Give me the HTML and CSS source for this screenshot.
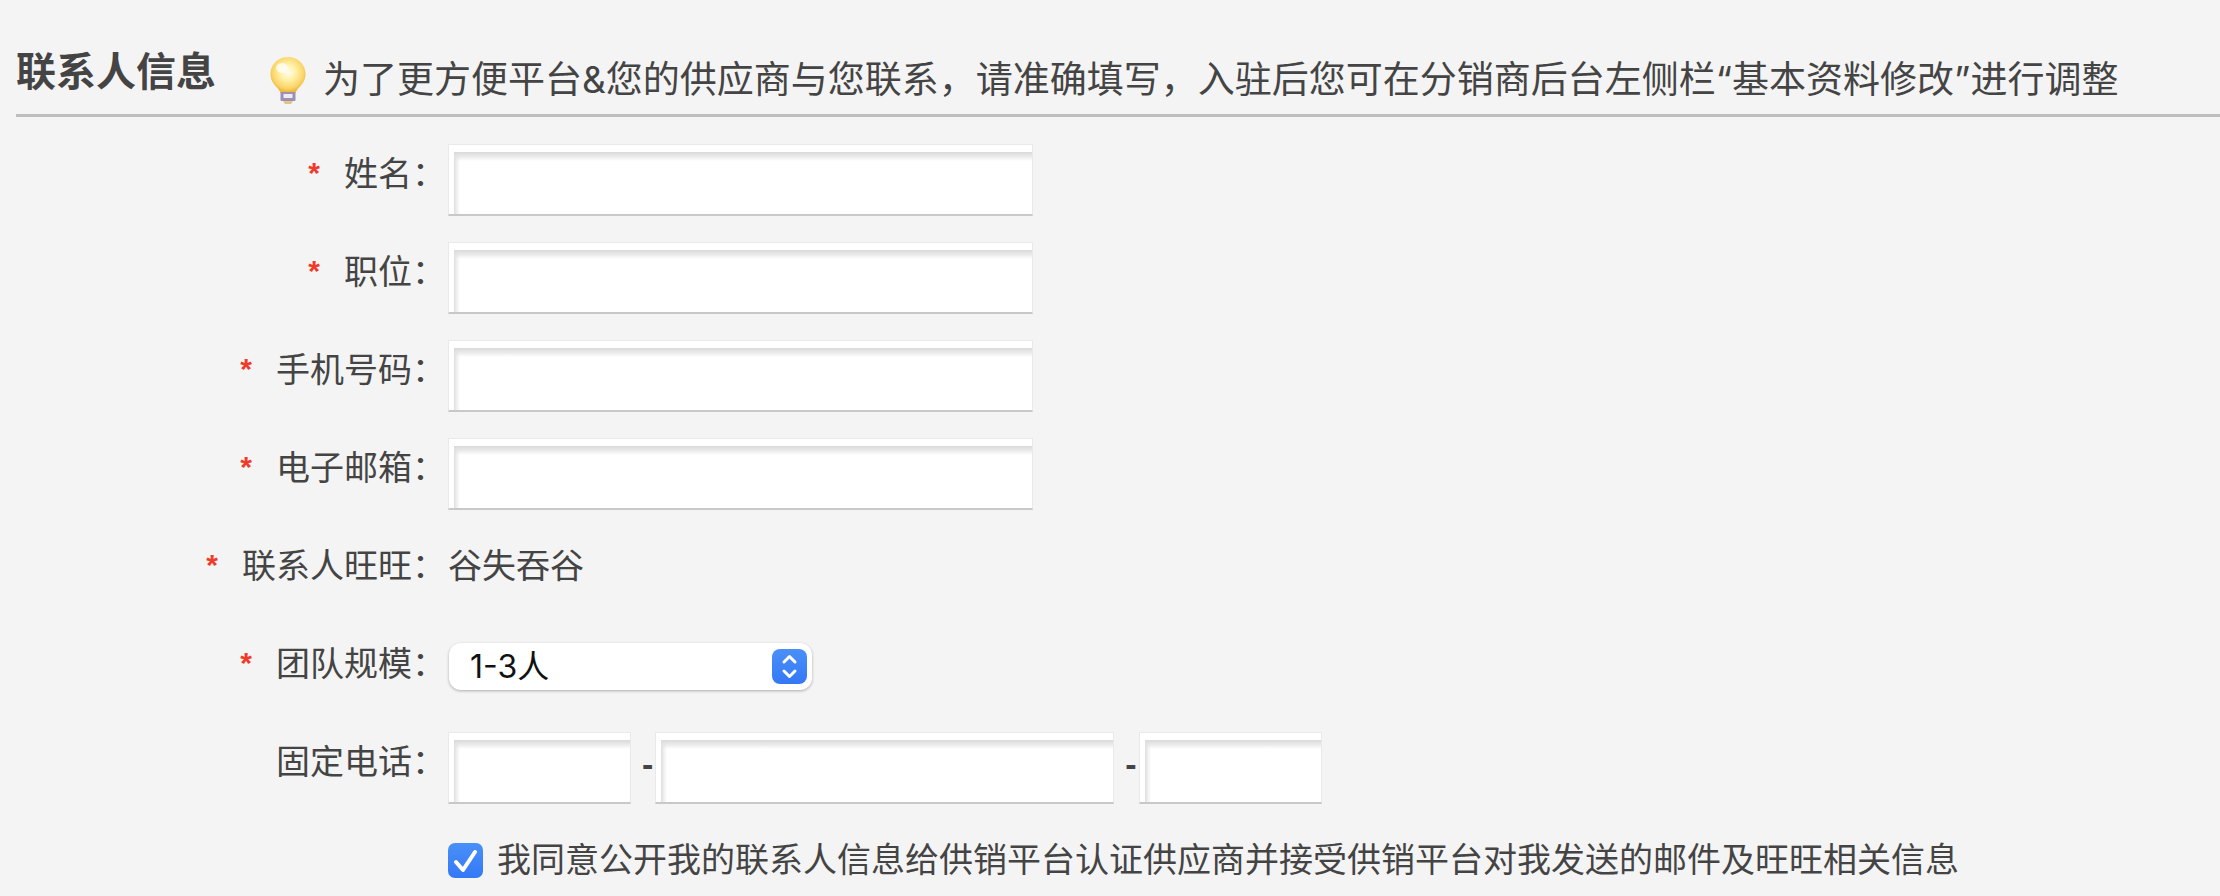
FILE: index.html
```html
<!DOCTYPE html>
<html lang="zh-CN">
<head>
<meta charset="utf-8">
<title>联系人信息</title>
<link rel="stylesheet" href="styles.css">
</head>
<body>
<main class="page">
  <header class="section-head">
    <h2 class="section-title">联系人信息</h2>
    <svg class="bulb" viewBox="0 0 38 48" aria-hidden="true">
      <defs>
        <radialGradient id="glass" cx="0.5" cy="0.42" r="0.56">
          <stop offset="0" stop-color="#fffef0"/>
          <stop offset="0.4" stop-color="#fff0a8"/>
          <stop offset="0.8" stop-color="#fad566"/>
          <stop offset="1" stop-color="#ecb440"/>
        </radialGradient>
      </defs>
      <path d="M19 1C9 1 1.500 8.500 1.500 18c0 6 3 10 6.500 13.500 2 2 3 3.500 3.500 5.500h15c.5-2 1.500-3.500 3.500-5.500 3.500-3.500 6.500-7.500 6.500-13.500C36.500 8.500 29 1 19 1z" fill="url(#glass)"/>
      <path d="M8 31c3 3 6 4 11 4s8-1 11-4c-2 2-3 4-3.500 6h-15C11 35 10 33 8 31z" fill="#f0b93d"/>
      <ellipse cx="13" cy="12" rx="6" ry="5" fill="#fffef8" opacity="0.8"/>
      <rect x="11.500" y="36" width="15" height="9" rx="1" fill="#9c90b4"/>
      <rect x="14.500" y="38" width="9" height="4" fill="#eeeaf8"/>
      <path d="M14 45h10l-2 3h-6z" fill="#e3c38c"/>
    </svg>
    <p class="hint">为了更方便平台&amp;您的供应商与您联系，请准确填写，入驻后您可在分销商后台左侧栏“基本资料修改”进行调整</p>
  </header>
  <form class="form">
    <div class="row">
      <label class="label" for="name"><span class="star">*</span>姓名：</label>
      <input class="field" id="name" type="text">
    </div>
    <div class="row">
      <label class="label" for="job"><span class="star">*</span>职位：</label>
      <input class="field" id="job" type="text">
    </div>
    <div class="row">
      <label class="label" for="mobile"><span class="star">*</span>手机号码：</label>
      <input class="field" id="mobile" type="tel">
    </div>
    <div class="row">
      <label class="label" for="email"><span class="star">*</span>电子邮箱：</label>
      <input class="field" id="email" type="email">
    </div>
    <div class="row">
      <span class="label"><span class="star">*</span>联系人旺旺：</span>
      <span class="value">谷失吞谷</span>
    </div>
    <div class="row">
      <label class="label" for="team"><span class="star">*</span>团队规模：</label>
      <div class="select-box">
        <select class="select" id="team"><option>1-3人</option></select>
        <svg class="select-arrow" viewBox="0 0 35 35" aria-hidden="true">
          <defs><linearGradient id="blue" x1="0" y1="0" x2="0" y2="1"><stop offset="0" stop-color="#4a90f8"/><stop offset="1" stop-color="#3478f6"/></linearGradient></defs>
          <rect width="35" height="35" rx="8" fill="url(#blue)"/>
          <path d="M12 13l5.500-5.500L23 13M12 22l5.500 5.500L23 22" fill="none" stroke="#fff" stroke-width="3" stroke-linecap="round" stroke-linejoin="round"/>
        </svg>
      </div>
    </div>
    <div class="row">
      <label class="label" for="area">固定电话：</label>
      <div class="phone">
        <input class="field field-short" id="area" type="text" aria-label="区号">
        <span class="dash">-</span>
        <input class="field field-mid" type="text" aria-label="电话号码">
        <span class="dash">-</span>
        <input class="field field-short" type="text" aria-label="分机号">
      </div>
    </div>
    <div class="row row-last">
      <label class="agree">
        <span class="check-box">
          <input class="check" type="checkbox" checked>
          <svg class="check-mark" viewBox="0 0 35 35" aria-hidden="true"><path d="M8 19l7 8L27 9" fill="none" stroke="#fff" stroke-width="4" stroke-linecap="round" stroke-linejoin="round"/></svg>
        </span>
        <span>我同意公开我的联系人信息给供销平台认证供应商并接受供销平台对我发送的邮件及旺旺相关信息</span>
      </label>
    </div>
  </form>
</main>
</body>
</html>
```
FILE: styles.css
```css
* { box-sizing: border-box; }

body {
  margin: 0;
  background: #f4f4f4;
  color: #444;
  font-family: "Liberation Sans", "Noto Sans CJK SC", sans-serif;
  font-size: 34px;
  line-height: 60px;
}

.page { padding: 40px 0 0 16px; }

.section-head {
  display: flex;
  align-items: flex-start;
  border-bottom: 3px solid #bdbdbd;
  padding-bottom: 4px;
}
.section-title {
  margin: 0;
  font-size: 40px;
  line-height: 64px;
  font-weight: 700;
  white-space: nowrap;
}
.bulb { width: 38px; height: 48px; margin: 16px 16px 0 53px; flex: none; }
.hint {
  margin: 10px 0 0;
  font-family: Inter, "Noto Sans CJK SC", sans-serif;
  font-size: 37px;
  white-space: nowrap;
}

.form { display: grid; gap: 26px; padding-top: 27px; }
.row {
  display: grid;
  grid-template-columns: 430px 1fr;
  column-gap: 2px;
  align-items: start;
  min-height: 72px;
}
.row-last { min-height: 60px; }
.label { text-align: right; white-space: nowrap; }
.star {
  margin-right: 24px;
  color: #f03a2a;
  font-size: 30px;
  font-weight: 700;
  line-height: 30px;
  vertical-align: 3px;
}

.field {
  width: 585px;
  height: 72px;
  padding: 8px 12px 0;
  font: inherit;
  color: inherit;
  border: 1px solid #e9e9e9;
  border-bottom: 2px solid #c8c8c8;
  outline: none;
  background:
    linear-gradient(#dadada, #e2e2e2cc 45%, #fff0) 5px 7px / 100% 9px no-repeat,
    linear-gradient(90deg, #dedede, #f0f0f0 50%, #fff) 5px 7px / 6px 100% no-repeat,
    #fff;
  background-clip: padding-box;
}
.field-short { width: 183px; }
.field-mid { width: 459px; }

.phone { display: flex; align-items: flex-start; }
.dash { margin: 2px 2px 0 11px; font-weight: 700; }

.select-box { position: relative; width: 363px; margin: 9px 0 0 1px; }
.select {
  display: block;
  width: 100%;
  height: 47px;
  padding: 0 48px 0 21px;
  appearance: none;
  border: 0;
  border-radius: 12px;
  background: #fff;
  box-shadow: 0 1px 3px #0000004d;
  color: #111;
  font: 32px/46px Inter, "Noto Sans CJK SC", sans-serif;
}
.select-arrow {
  position: absolute;
  top: 6px;
  right: 5px;
  width: 35px;
  height: 35px;
  pointer-events: none;
}

.agree { grid-column: 2; display: flex; align-items: center; gap: 14px; white-space: nowrap; }
.check-box { position: relative; width: 35px; height: 35px; }
.check {
  display: block;
  width: 35px;
  height: 35px;
  margin: 0;
  appearance: none;
  border-radius: 7px;
  background: linear-gradient(#4a90f8, #3478f6);
}
.check-mark { position: absolute; inset: 0; pointer-events: none; }
```
